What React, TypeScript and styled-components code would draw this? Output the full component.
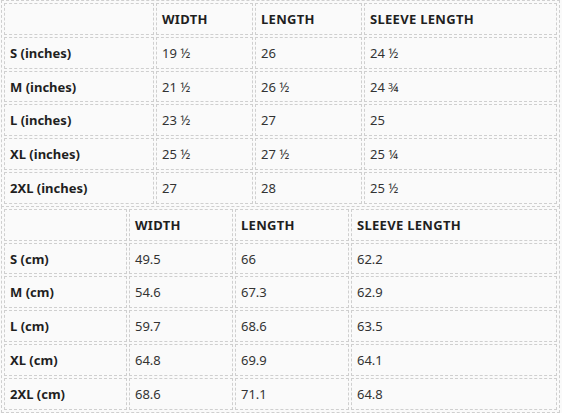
import React from "react";
import styled, { createGlobalStyle } from "styled-components";

const GlobalStyle = createGlobalStyle`
  html, body {
    margin: 0;
    padding: 0;
    background: #fafafa;
  }
  body {
    font-family: "Segoe UI", "Noto Sans", "Open Sans", sans-serif;
    color: #333;
  }
`;

const Page = styled.div`
  padding-left: 1px;
  width: 559px;
`;

const SizeTable = styled.table`
  width: 559px;
  table-layout: fixed;
  border-collapse: separate;
  border-spacing: 2px;
  border: 1px dashed #cfcfcf;
  background: #fafafa;

  & + & {
    margin-top: -1px;
  }
`;

const Cell = styled.td<{ $w?: number; $head?: boolean; $caps?: boolean }>`
  box-sizing: border-box;
  width: ${(p) => (p.$w ? `${p.$w}px` : "auto")};
  border: 1px dashed #cfcfcf;
  padding: 7px 5px 5px;
  font-size: 13px;
  line-height: 17.8px;
  font-weight: ${(p) => (p.$head ? 700 : 400)};
  color: ${(p) => (p.$head ? "#1f1f1f" : "#333")};
  letter-spacing: ${(p) => (p.$caps ? "0.3px" : "normal")};
  text-align: left;
  white-space: nowrap;
`;

type Chart = {
  widths: number[];
  unit: string;
  rows: [string, string, string, string][];
};

const charts: Chart[] = [
  {
    widths: [150, 97, 107],
    unit: "inches",
    rows: [
      ["S", "19 ½", "26", "24 ½"],
      ["M", "21 ½", "26 ½", "24 ¾"],
      ["L", "23 ½", "27", "25"],
      ["XL", "25 ½", "27 ½", "25 ¼"],
      ["2XL", "27", "28", "25 ½"],
    ],
  },
  {
    widths: [123, 104, 114],
    unit: "cm",
    rows: [
      ["S", "49.5", "66", "62.2"],
      ["M", "54.6", "67.3", "62.9"],
      ["L", "59.7", "68.6", "63.5"],
      ["XL", "64.8", "69.9", "64.1"],
      ["2XL", "68.6", "71.1", "64.8"],
    ],
  },
];

const headings = ["WIDTH", "LENGTH", "SLEEVE LENGTH"];

const SizeChart = ({ chart }: { chart: Chart }) => (
  <SizeTable>
    <tbody>
      <tr>
        <Cell $w={chart.widths[0]} />
        {headings.map((h, i) => (
          <Cell key={h} $head $caps $w={chart.widths[i + 1]}>
            {h}
          </Cell>
        ))}
      </tr>
      {chart.rows.map(([size, ...vals]) => (
        <tr key={size}>
          <Cell $head>
            {size} ({chart.unit})
          </Cell>
          {vals.map((v, i) => (
            <Cell key={i}>{v}</Cell>
          ))}
        </tr>
      ))}
    </tbody>
  </SizeTable>
);

export default function App() {
  return (
    <>
      <GlobalStyle />
      <Page>
        {charts.map((c) => (
          <SizeChart key={c.unit} chart={c} />
        ))}
      </Page>
    </>
  );
}
